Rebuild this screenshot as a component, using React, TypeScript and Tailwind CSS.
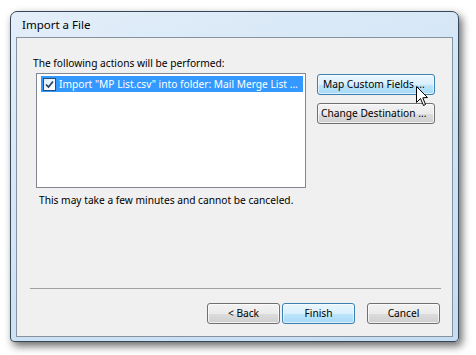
import React from "react";

const btn =
  "h-[21px] rounded-[3px] border border-[#707070] bg-[linear-gradient(to_bottom,#f2f2f2_0%,#ebebeb_50%,#dddddd_51%,#cfcfcf_100%)] text-[10.2px] leading-[19px] text-black shadow-[inset_0_0_0_1px_rgba(255,255,255,0.7)] whitespace-nowrap";
const btnHot =
  "h-[21px] rounded-[3px] border border-[#3c7fb1] bg-[linear-gradient(to_bottom,#eaf6fd_0%,#d9f0fc_50%,#bee6fd_51%,#a7d9f5_100%)] text-[10.2px] leading-[19px] text-black shadow-[inset_0_0_0_1px_rgba(255,255,255,0.6)] whitespace-nowrap";

function Cursor() {
  return (
    <svg
      className="absolute left-[416px] top-[86px]"
      width="13"
      height="21"
      viewBox="0 0 13 21"
    >
      <path
        d="M0.5 0.5 L0.5 16.5 L4.5 12.5 L7.5 19.5 L9.5 18.5 L6.8 11.8 L11.5 11.5 Z"
        fill="#fff"
        stroke="#000"
        strokeWidth="1"
        strokeLinejoin="round"
      />
    </svg>
  );
}

export default function App() {
  return (
    <div className="relative w-[476px] h-[355px] bg-white pl-[10px] pt-[11px] font-['Noto_Sans',sans-serif] overflow-hidden">
      {/* window frame */}
      <div className="w-[449px] h-[331px] rounded-t-[7px] rounded-b-[4px] border border-[#34485a] bg-[linear-gradient(160deg,#e3eef9_0%,#d3e5f6_45%,#c5dcf1_100%)] shadow-[3px_4px_9px_rgba(0,0,0,0.6)] flex flex-col px-[5px] pb-[4px]">
        <div className="h-[25px] pl-[6px] flex items-center text-[11.5px] text-black">
          Import a File
        </div>

        {/* client area */}
        <div className="flex-1 flex flex-col border border-[#8592a0] bg-[#f0f0f0] pt-[17px] pl-[16px]">
          <div className="text-[10.2px] leading-[16px] text-black">
            The following actions will be performed:
          </div>

          <div className="mt-[2px] ml-[3px] flex gap-[11px]">
            <div className="w-[270px] h-[115px] border border-[#828790] bg-white pt-[2px] pl-[4px] pr-[2px]">
              <div className="h-[16px] bg-[#3399ff] flex items-center text-white text-[10.2px] leading-[16px] whitespace-nowrap overflow-hidden">
                <span className="ml-[2px] w-[13px] h-[13px] border border-[#1c5180] bg-[linear-gradient(135deg,#dfeaf6,#ffffff)] flex items-center justify-center shrink-0">
                  <svg width="9" height="9" viewBox="0 0 9 9">
                    <path
                      d="M1 4.5 L3.5 7 L8 1.5"
                      fill="none"
                      stroke="#1f3f6b"
                      strokeWidth="1.7"
                    />
                  </svg>
                </span>
                <span className="ml-[3px]">
                  Import &quot;MP List.csv&quot; into folder: Mail Merge List ...
                </span>
              </div>
            </div>

            <div className="flex flex-col pt-[1px] gap-[8px]">
              <button className={`${btnHot} w-[118px] text-left pl-[5px]`}>
                Map Custom Fields ...
              </button>
              <button className={`${btn} w-[118px] text-left pl-[3px]`}>
                Change Destination ...
              </button>
            </div>
          </div>

          <div className="mt-[4px] ml-[6px] text-[10.2px] leading-[16px] text-black">
            This may take a few minutes and cannot be canceled.
          </div>

          <div className="flex-1" />

          <div className="-ml-[3px] mr-[11px] h-[2px] border-t border-[#a0a0a0] border-b-white" />

          <div className="mt-[13px] mb-[12px] mr-[12px] flex justify-end">
            <button className={`${btn} w-[73px]`}>&lt; Back</button>
            <button className={`${btnHot} w-[73px] ml-[2px]`}>Finish</button>
            <button className={`${btn} w-[73px] ml-[12px]`}>Cancel</button>
          </div>
        </div>
      </div>
      <Cursor />
    </div>
  );
}
